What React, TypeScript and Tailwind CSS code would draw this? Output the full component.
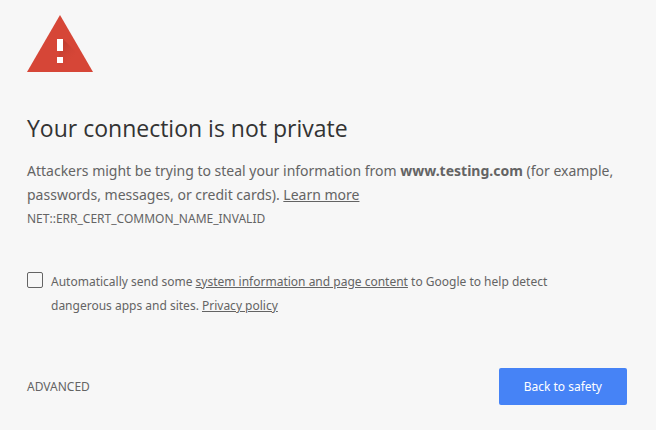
import React, { useState } from "react";

const ERROR_CODE = "NET::ERR_CERT_COMMON_NAME_INVALID";

function WarningIcon() {
  return (
    <svg width="66" height="57" viewBox="0 0 66 57" aria-hidden="true">
      <defs>
        <linearGradient
          id="shade"
          gradientUnits="userSpaceOnUse"
          x1="33"
          y1="33"
          x2="46"
          y2="46"
        >
          <stop offset="0" stopColor="#b93a2d" stopOpacity="0.7" />
          <stop offset="1" stopColor="#d64637" stopOpacity="0" />
        </linearGradient>
      </defs>
      <path d="M33 0 L66 57 H0 Z" fill="#d64637" />
      <path d="M36 24 L54 42 V57 H39 L30 48 Z" fill="url(#shade)" />
      <path d="M30 24 H36 V36 H30 Z M30 42 H36 V48 H30 Z" fill="#fff" />
    </svg>
  );
}

export default function App() {
  const [report, setReport] = useState(false);

  return (
    <main className="min-h-screen bg-[#f7f7f7] pt-[15px] pr-[29px] pb-6 pl-[27px] font-['Noto_Sans',sans-serif] text-[#646464]">
      <WarningIcon />

      <h1 className="mt-10 font-['Open_Sans',sans-serif] text-[23px] leading-8 text-[#333]">
        Your connection is not private
      </h1>

      <p className="mt-[15px] text-[14px] leading-6">
        Attackers might be trying to steal your information from{" "}
        <strong>www.testing.com</strong> (for example, passwords, messages, or
        credit cards).{" "}
        <a href="#learn" className="underline">
          Learn more
        </a>
      </p>
      <p className="text-[12px] leading-6">{ERROR_CODE}</p>

      <div className="mt-[37px] flex gap-2 pr-8">
        <input
          id="report"
          type="checkbox"
          checked={report}
          onChange={(e) => setReport(e.target.checked)}
          className="mt-1 size-4 shrink-0 appearance-none rounded-xs border border-[#646464] checked:bg-[#4285f4]"
        />
        <label htmlFor="report" className="pt-[2px] text-[12px] leading-6">
          Automatically send some{" "}
          <a href="#info" className="underline">
            system information and page content
          </a>{" "}
          to Google to help detect dangerous apps and sites.{" "}
          <a href="#privacy" className="underline">
            Privacy policy
          </a>
        </label>
      </div>

      <div className="mt-[50px] flex items-center justify-between">
        <button type="button" className="text-[12px]">
          ADVANCED
        </button>
        <button
          type="button"
          className="rounded-xs bg-[#4683f6] px-[25px] py-2 text-[12px] leading-[21px] text-white"
        >
          Back to safety
        </button>
      </div>
    </main>
  );
}
